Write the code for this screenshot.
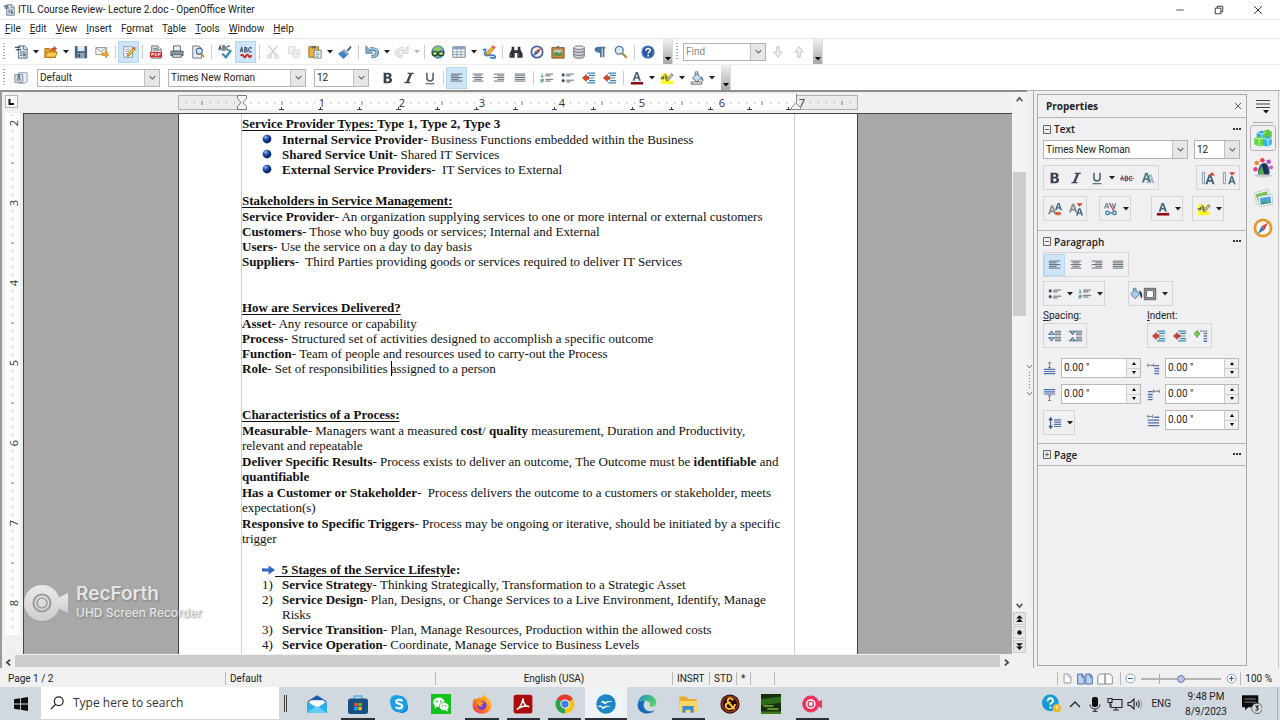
<!DOCTYPE html>
<html lang="en">
    <head>
        <meta charset="UTF-8" />
        <meta name="viewport" content="width=device-width, initial-scale=1.0" />
        <title>ITIL Course Review- Lecture 2.doc - OpenOffice Writer</title>
        <style>
            body {
                margin: 0;
                height: 100vh;
                overflow: hidden;
                font: 10px/14px Roboto, 'Open Sans', sans-serif;
                color: #222;
                background: #fff;
            }
        </style>
    </head>
    <body>
        <writer-app></writer-app>

        <template id="writer-app">
            <style>
                :host {
                    display: flex;
                    flex-direction: column;
                    height: 100%;
                }
                .work {
                    flex: 1;
                    min-height: 0;
                    display: flex;
                    background: #f0eff1;
                }
                .doc {
                    flex: 1;
                    min-width: 0;
                    display: flex;
                    flex-direction: column;
                    border-top: 2px solid #8e8e8e;
                    border-left: 2px solid #9a9a9a;
                    box-sizing: border-box;
                }
                .row {
                    flex: 1;
                    min-height: 0;
                    display: flex;
                }
                .pane {
                    flex: 1;
                    min-width: 0;
                    display: flex;
                    flex-direction: column;
                }
                .sheet {
                    flex: 1;
                    min-height: 0;
                    display: flex;
                }
                .canvas {
                    flex: 1;
                    display: flex;
                    justify-content: center;
                    overflow: hidden;
                    background: #a9a8a9;
                    border-top: 1px solid #444;
                    border-left: 1px solid #444;
                    box-sizing: border-box;
                }
            </style>
            <title-bar>ITIL Course Review- Lecture 2.doc - OpenOffice Writer</title-bar>
            <menu-bar></menu-bar>
            <standard-bar></standard-bar>
            <format-bar></format-bar>
            <div class="work">
                <div class="doc">
                    <div class="row">
                        <div class="pane">
                            <h-ruler></h-ruler>
                            <div class="sheet">
                                <v-ruler></v-ruler>
                                <div class="canvas"><doc-page></doc-page></div>
                            </div>
                        </div>
                        <v-scroll></v-scroll>
                    </div>
                    <h-scroll></h-scroll>
                </div>
                <side-bar></side-bar>
            </div>
            <status-bar></status-bar>
            <task-bar></task-bar>
            <rec-mark></rec-mark>
        </template>

        <template id="title-bar">
            <style>
                :host {
                    display: flex;
                    align-items: center;
                    height: 19px;
                    padding: 0 3px;
                    border-bottom: 1px solid #e4e4e4;
                }
                oo-icon {
                    --size: 12px;
                    margin-right: 3px;
                }
                span {
                    flex: 1;
                }
                button {
                    width: 39px;
                    height: 19px;
                    padding: 0;
                    border: 0;
                    background: none;
                }
                button oo-icon {
                    --size: 10px;
                    margin: 0;
                }
            </style>
            <oo-icon name="new"></oo-icon>
            <span><slot></slot></span>
            <button aria-label="Minimize"><oo-icon name="min"></oo-icon></button>
            <button aria-label="Restore"><oo-icon name="restore"></oo-icon></button>
            <button aria-label="Close"><oo-icon name="close"></oo-icon></button>
        </template>

        <template id="menu-bar">
            <style>
                :host {
                    display: block;
                    border-bottom: 1px solid #e4e4e4;
                }
                nav {
                    display: flex;
                    gap: 9px;
                    height: 18px;
                    padding-left: 5px;
                    align-items: center;
                }
                a {
                    color: #222;
                    text-decoration: none;
                }
                u {
                    text-underline-offset: 1px;
                }
            </style>
            <nav>
                <a href="#"><u>F</u>ile</a>
                <a href="#"><u>E</u>dit</a>
                <a href="#"><u>V</u>iew</a>
                <a href="#"><u>I</u>nsert</a>
                <a href="#">F<u>o</u>rmat</a>
                <a href="#">T<u>a</u>ble</a>
                <a href="#"><u>T</u>ools</a>
                <a href="#"><u>W</u>indow</a>
                <a href="#"><u>H</u>elp</a>
            </nav>
        </template>

        <template id="standard-bar">
            <style>
                :host {
                    display: flex;
                    align-items: center;
                    height: 25px;
                }
                tool-more {
                    margin-left: 5px;
                }
                combo-box {
                    width: 83px;
                    margin-right: 1px;
                    color: #8a8a8a;
                }
                .end {
                    margin-left: 4px;
                }
            </style>
            <tool-grip></tool-grip>
            <tool-button icon="new" label="New" drop></tool-button>
            <tool-button icon="open" label="Open" drop></tool-button>
            <tool-button icon="save" label="Save"></tool-button>
            <tool-button icon="mail" label="E-mail"></tool-button>
            <tool-sep></tool-sep>
            <tool-button icon="edit" label="Edit File" active></tool-button>
            <tool-sep></tool-sep>
            <tool-button icon="pdf" label="Export as PDF"></tool-button>
            <tool-button icon="print" label="Print"></tool-button>
            <tool-button icon="preview" label="Page Preview"></tool-button>
            <tool-sep></tool-sep>
            <tool-button icon="spell" label="Spelling"></tool-button>
            <tool-button icon="autospell" label="AutoSpellcheck" active></tool-button>
            <tool-sep></tool-sep>
            <tool-button icon="cut" label="Cut"></tool-button>
            <tool-button icon="copy" label="Copy"></tool-button>
            <tool-button icon="paste" label="Paste" drop></tool-button>
            <tool-button icon="brush" label="Format Paintbrush"></tool-button>
            <tool-sep></tool-sep>
            <tool-button icon="undo" label="Undo" drop></tool-button>
            <tool-button icon="redo" label="Redo" drop dim></tool-button>
            <tool-sep></tool-sep>
            <tool-button icon="link" label="Hyperlink"></tool-button>
            <tool-button icon="table" label="Table" drop></tool-button>
            <tool-button icon="draw" label="Show Draw Functions"></tool-button>
            <tool-sep></tool-sep>
            <tool-button icon="find" label="Find and Replace"></tool-button>
            <tool-button icon="compass" label="Navigator"></tool-button>
            <tool-button icon="gallery" label="Gallery"></tool-button>
            <tool-button icon="db" label="Data Sources"></tool-button>
            <tool-button icon="pilcrow" label="Nonprinting Characters"></tool-button>
            <tool-button icon="zoom" label="Zoom"></tool-button>
            <tool-sep></tool-sep>
            <tool-button icon="help" label="Help"></tool-button>
            <tool-more></tool-more>
            <tool-grip></tool-grip>
            <combo-box label="Find" text="Find" editable></combo-box>
            <tool-button icon="down" label="Find Next"></tool-button>
            <tool-button icon="up" label="Find Previous"></tool-button>
            <tool-more class="end"></tool-more>
        </template>

        <template id="format-bar">
            <style>
                :host {
                    display: flex;
                    align-items: center;
                    height: 26px;
                    border-top: 1px solid #ececec;
                    box-sizing: border-box;
                }
                combo-box {
                    width: 138px;
                    margin-right: 8px;
                }
                .style {
                    width: 123px;
                    margin-left: 6px;
                    margin-right: 8px;
                }
                .size {
                    width: 55px;
                }
                tool-more {
                    margin-left: 5px;
                }
            </style>
            <tool-grip></tool-grip>
            <tool-button icon="styles" label="Styles and Formatting"></tool-button>
            <combo-box class="style" label="Apply Style" text="Default"></combo-box>
            <combo-box label="Font Name" text="Times New Roman"></combo-box>
            <combo-box class="size" label="Font Size" text="12"></combo-box>
            <tool-button icon="bold" label="Bold"></tool-button>
            <tool-button icon="italic" label="Italic"></tool-button>
            <tool-button icon="underline" label="Underline"></tool-button>
            <tool-sep></tool-sep>
            <tool-button icon="left" label="Align Left" active></tool-button>
            <tool-button icon="center" label="Centered"></tool-button>
            <tool-button icon="right" label="Align Right"></tool-button>
            <tool-button icon="justify" label="Justified"></tool-button>
            <tool-sep></tool-sep>
            <tool-button icon="numbers" label="Numbering On/Off"></tool-button>
            <tool-button icon="bullets" label="Bullets On/Off"></tool-button>
            <tool-button icon="outdent" label="Decrease Indent"></tool-button>
            <tool-button icon="outdent" label="Increase Indent"></tool-button>
            <tool-sep></tool-sep>
            <tool-button icon="color" label="Font Color" drop></tool-button>
            <tool-button icon="highlight" label="Highlighting" drop></tool-button>
            <tool-button icon="fill" label="Background Color" drop></tool-button>
            <tool-more></tool-more>
        </template>

        <template id="doc-page">
            <style>
                :host {
                    display: block;
                    flex: none;
                    width: 680px;
                    box-sizing: border-box;
                    padding: 0 62px;
                    background: #fff;
                    border: solid #444;
                    border-width: 0 1px;
                    font: 13px/15px 'Liberation Serif', serif;
                    color: #111;
                }
                .body {
                    height: 100%;
                    padding-top: 2px;
                    box-sizing: border-box;
                    border: solid #d0d0d0;
                    border-width: 0 1px;
                    white-space: nowrap;
                }
                section {
                    margin-bottom: 31px;
                }
                section.near {
                    margin-bottom: 16px;
                }
                section.long p + p {
                    margin-top: 1px;
                }
                h2,
                p,
                ul,
                ol {
                    margin: 0;
                    padding: 0;
                    font-size: 13px;
                }
                h2 {
                    line-height: 16px;
                }
                u {
                    text-underline-offset: 2px;
                }
                li {
                    display: flex;
                    white-space: pre;
                }
                li > :first-child {
                    width: 20px;
                    padding-left: 20px;
                    flex: none;
                }
                li.stage > :first-child {
                    width: 13px;
                }
                oo-icon {
                    --size: 10px;
                    padding-top: 2px;
                    height: 10px;
                    display: block;
                }
                .arrow {
                    --size: 13px;
                    padding-top: 1px;
                }
                i {
                    display: inline-block;
                    width: 1px;
                    height: 15px;
                    margin-right: -1px;
                    vertical-align: top;
                    background: #000;
                }
            </style>
            <div class="body">
                <section class="near">
                    <h2><u>Service Provider Types: </u>Type 1, Type 2, Type 3</h2>
                    <ul>
                        <li><oo-icon name="ball"></oo-icon><span><b>Internal Service Provider</b>- Business Functions embedded within the Business</span></li>
                        <li><oo-icon name="ball"></oo-icon><span><b>Shared Service Unit</b>- Shared IT Services</span></li>
                        <li><oo-icon name="ball"></oo-icon><span><b>External Service Providers</b>-  IT Services to External</span></li>
                    </ul>
                </section>
                <section>
                    <h2><u>Stakeholders in Service Management:</u></h2>
                    <p><b>Service Provider</b>- An organization supplying services to one or more internal or external customers</p>
                    <p><b>Customers</b>- Those who buy goods or services; Internal and External</p>
                    <p><b>Users</b>- Use the service on a day to day basis</p>
                    <p><b>Suppliers</b>-&nbsp; Third Parties providing goods or services required to deliver IT Services</p>
                </section>
                <section>
                    <h2><u>How are Services Delivered?</u></h2>
                    <p><b>Asset</b>- Any resource or capability</p>
                    <p><b>Process</b>- Structured set of activities designed to accomplish a specific outcome</p>
                    <p><b>Function</b>- Team of people and resources used to carry-out the Process</p>
                    <p><b>Role</b>- Set of responsibilities <i></i>assigned to a person</p>
                </section>
                <section class="near long">
                    <h2><u>Characteristics of a Process:</u></h2>
                    <p><b>Measurable</b>- Managers want a measured <b>cost</b>/ <b>quality</b> measurement, Duration and Productivity,<br />relevant and repeatable</p>
                    <p><b>Deliver Specific Results</b>- Process exists to deliver an outcome, The Outcome must be <b>identifiable</b> and<br /><b>quantifiable</b></p>
                    <p><b>Has a Customer or Stakeholder</b>-&nbsp; Process delivers the outcome to a customers or stakeholder, meets<br />expectation(s)</p>
                    <p><b>Responsive to Specific Triggers</b>- Process may be ongoing or iterative, should be initiated by a specific<br />trigger</p>
                </section>
                <ol>
                    <li class="stage"><oo-icon class="arrow" name="arrow"></oo-icon><b><u>  5 Stages of the Service Lifestyl</u>e:</b></li>
                    <li><span>1)</span><span><b>Service Strategy</b>- Thinking Strategically, Transformation to a Strategic Asset</span></li>
                    <li><span>2)</span><span><b>Service Design</b>- Plan, Designs, or Change Services to a Live Environment, Identify, Manage<br />Risks</span></li>
                    <li><span>3)</span><span><b>Service Transition</b>- Plan, Manage Resources, Production within the allowed costs</span></li>
                    <li><span>4)</span><span><b>Service Operation</b>- Coordinate, Manage Service to Business Levels</span></li>
                </ol>
            </div>
        </template>

        <template id="v-scroll">
            <style>
                :host {
                    display: flex;
                    flex-direction: column;
                    width: 15px;
                    background: #f4f3f4;
                }
                button {
                    display: grid;
                    place-items: center;
                    height: 14px;
                    margin: 0 1px;
                    padding: 0;
                    border: 0;
                    background: none;
                }
                .box {
                    height: 13px;
                    margin-bottom: 1px;
                    background: #e6e6e6;
                    border: 1px solid #c8c8c8;
                }
                oo-icon {
                    --size: 9px;
                }
                .track {
                    flex: 1;
                    padding: 66px 1px 0;
                }
                .thumb {
                    height: 144px;
                    background: #cdcccd;
                }
            </style>
            <button aria-label="Scroll up"><oo-icon name="chevup"></oo-icon></button>
            <div class="track"><div class="thumb"></div></div>
            <button aria-label="Scroll down"><oo-icon name="chevdown"></oo-icon></button>
            <button class="box" aria-label="Previous page"><oo-icon name="pageup"></oo-icon></button>
            <button class="box" aria-label="Navigation"><oo-icon name="dot"></oo-icon></button>
            <button class="box" aria-label="Next page"><oo-icon name="pagedown"></oo-icon></button>
        </template>

        <template id="h-scroll">
            <style>
                :host {
                    display: flex;
                    height: 14px;
                    padding-right: 14px;
                    background: #f0f0f0;
                }
                button {
                    width: 13px;
                    padding: 0;
                    border: 0;
                    background: none;
                }
                oo-icon {
                    --size: 9px;
                }
                .thumb {
                    flex: 1;
                    margin: 1px 0;
                    background: #cdcccd;
                }
            </style>
            <button aria-label="Scroll left"><oo-icon name="chevleft"></oo-icon></button>
            <div class="thumb"></div>
            <button aria-label="Scroll right"><oo-icon name="chevright"></oo-icon></button>
        </template>

        <template id="side-bar">
            <style>
                :host {
                    display: flex;
                    border-top: 1px solid #b0b0b0;
                    box-sizing: border-box;
                }
                .split {
                    width: 6px;
                    display: grid;
                    align-items: center;
                    border-right: 1px solid #a8a8a8;
                }
                .panel {
                    width: 208px;
                    margin: 3px 0 2px 3px;
                    border: 1px solid #aaa;
                }
                header {
                    display: flex;
                    align-items: center;
                    justify-content: space-between;
                    height: 22px;
                    padding: 0 4px 0 8px;
                    border-bottom: 1px solid #b4b4b4;
                }
                h2 {
                    margin: 0;
                    font: 700 10px/14px 'Open Sans', sans-serif;
                }
                header button,
                .tabs button {
                    border: 0;
                    padding: 0;
                    background: none;
                    display: grid;
                    place-items: center;
                }
                header oo-icon {
                    --size: 8px;
                }
                .body {
                    display: grid;
                    gap: 6px;
                    padding: 0 6px 9px 5px;
                }
                .body.para {
                    gap: 4px;
                    padding-bottom: 8px;
                }
                .fonts {
                    display: grid;
                    grid-template-columns: 1fr 46px;
                    gap: 6px;
                }
                combo-box {
                    height: 19px;
                }
                .line {
                    display: grid;
                    grid-template-columns: 1fr auto;
                    justify-items: start;
                }
                .four {
                    grid-template-columns: 56px 52px 41px auto;
                }
                .fill {
                    grid-template-columns: 85px auto;
                }
                .two {
                    display: grid;
                    grid-template-columns: 104px 1fr;
                    justify-items: start;
                    row-gap: 1px;
                    line-height: 12px;
                }
                .fields {
                    display: grid;
                    grid-template-columns: 98px 92px;
                    gap: 6px;
                    padding-top: 6px;
                }
                .tabs {
                    width: 30px;
                    display: flex;
                    flex-direction: column;
                    align-items: center;
                    gap: 4px;
                    padding-top: 6px;
                    padding-left: 1px;
                    border-right: 1px solid #c4c4c4;
                    margin-right: 1px;
                }
                .tabs button {
                    width: 26px;
                    height: 26px;
                    box-sizing: border-box;
                    border-radius: 3px;
                }
                .tabs .menu {
                    height: 18px;
                }
                .tabs hr {
                    width: 20px;
                    margin: 3px 0 0;
                    border: 0;
                    border-top: 1px solid #aaa;
                }
                .tabs .on {
                    border: 1px solid #b4b4b4;
                    margin-top: -2px;
                }
                .tabs oo-icon {
                    --size: 20px;
                }
                .tabs .menu oo-icon {
                    --size: 16px;
                }
            </style>
            <div class="split">
                <svg width="5" height="32" fill="none" stroke="#777">
                    <path d="M0 1l2.500 3L5 1M0 28l2.500 3 2.500-3" />
                    <path d="M2.500 8v18" stroke-dasharray="1 2" />
                </svg>
            </div>
            <div class="panel">
                <header>
                    <h2>Properties</h2>
                    <button aria-label="Close Sidebar"><oo-icon name="close"></oo-icon></button>
                </header>
                <panel-head open>Text</panel-head>
                <div class="body">
                    <div class="fonts">
                        <combo-box label="Font Name" text="Times New Roman"></combo-box>
                        <combo-box label="Font Size" text="12"></combo-box>
                    </div>
                    <div class="line">
                        <tool-group>
                            <tool-button icon="bold" label="Bold"></tool-button>
                            <tool-button icon="italic" label="Italic"></tool-button>
                            <tool-button icon="underline" label="Underline" drop></tool-button>
                            <tool-button icon="strike" label="Strikethrough"></tool-button>
                            <tool-button icon="shadow" label="Shadow"></tool-button>
                        </tool-group>
                        <tool-group>
                            <tool-button icon="grow" label="Increase Font Size"></tool-button>
                            <tool-button icon="shrink" label="Decrease Font Size"></tool-button>
                        </tool-group>
                    </div>
                    <div class="line four">
                        <tool-group>
                            <tool-button icon="super" label="Superscript"></tool-button>
                            <tool-button icon="sub" label="Subscript"></tool-button>
                        </tool-group>
                        <tool-group><tool-button icon="spacing" label="Character Spacing" drop></tool-button></tool-group>
                        <tool-group><tool-button icon="color" label="Font Color" drop></tool-button></tool-group>
                        <tool-group><tool-button icon="highlight" label="Highlighting" drop></tool-button></tool-group>
                    </div>
                </div>
                <panel-head open>Paragraph</panel-head>
                <div class="body para">
                    <tool-group>
                        <tool-button icon="left" label="Align Left" active></tool-button>
                        <tool-button icon="center" label="Centered"></tool-button>
                        <tool-button icon="right" label="Align Right"></tool-button>
                        <tool-button icon="justify" label="Justified"></tool-button>
                    </tool-group>
                    <div class="line fill">
                        <tool-group>
                            <tool-button icon="bullets" label="Bullets" drop></tool-button>
                            <tool-button icon="numbers" label="Numbering" drop></tool-button>
                        </tool-group>
                        <tool-group>
                            <tool-button class="tight" icon="bucket" label="Background"></tool-button>
                            <tool-button class="tight" icon="square" label="Paragraph Color" drop></tool-button>
                        </tool-group>
                    </div>
                    <div class="two">
                        <span><u>S</u>pacing:</span>
                        <span><u>I</u>ndent:</span>
                        <tool-group>
                            <tool-button icon="morespace" label="Increase Spacing"></tool-button>
                            <tool-button icon="lessspace" label="Decrease Spacing"></tool-button>
                        </tool-group>
                        <tool-group>
                            <tool-button icon="outdent" label="Increase Indent"></tool-button>
                            <tool-button icon="outdent" label="Decrease Indent"></tool-button>
                            <tool-button icon="hanging" label="Hanging Indent"></tool-button>
                        </tool-group>
                    </div>
                    <div class="fields">
                        <spin-field icon="above" label="Above Paragraph"></spin-field>
                        <spin-field icon="before" label="Before Text"></spin-field>
                        <spin-field icon="below" label="Below Paragraph"></spin-field>
                        <spin-field icon="after" label="After Text"></spin-field>
                        <tool-group><tool-button icon="linespace" label="Line Spacing" drop></tool-button></tool-group>
                        <spin-field icon="firstline" label="First Line"></spin-field>
                    </div>
                </div>
                <panel-head last>Page</panel-head>
            </div>
            <div class="tabs">
                <button class="menu" aria-label="Sidebar Settings"><oo-icon name="menu"></oo-icon></button>
                <hr />
                <button class="on" aria-label="Properties"><oo-icon name="cubes"></oo-icon></button>
                <button aria-label="Styles"><oo-icon name="people"></oo-icon></button>
                <button aria-label="Gallery"><oo-icon name="photos"></oo-icon></button>
                <button aria-label="Navigator"><oo-icon name="navring"></oo-icon></button>
            </div>
        </template>

        <template id="status-bar">
            <style>
                :host {
                    display: flex;
                    height: 19px;
                    align-items: center;
                    padding: 2px 8px 0 8px;
                    box-sizing: border-box;
                    background: #f0f0f1;
                }
                span {
                    height: 13px;
                    line-height: 13px;
                    box-sizing: border-box;
                    padding-left: 4px;
                    border-left: 1px solid #b8b8b8;
                }
                .page {
                    width: 217px;
                    padding: 0;
                    border: 0;
                }
                .style {
                    width: 210px;
                }
                .lang {
                    width: 237px;
                    padding: 0;
                    text-align: center;
                }
                .ins {
                    width: 37px;
                }
                .std {
                    width: 27px;
                }
                .mod {
                    width: 14px;
                }
                .sig {
                    width: 24px;
                }
                .rest {
                    flex: 1;
                }
                .views,
                .zoom {
                    display: flex;
                    align-items: center;
                }
                .views {
                    width: 63px;
                    gap: 4px;
                }
                .zoom {
                    width: 120px;
                    gap: 2px;
                }
                .views oo-icon.wide {
                    --size: 16px;
                }
                oo-icon {
                    --size: 11px;
                }
                button {
                    display: flex;
                    padding: 0;
                    border: 0;
                    background: none;
                }
                input {
                    appearance: none;
                    width: 80px;
                    height: 13px;
                    margin: 0 3px;
                    background: linear-gradient(#aaa, #aaa) 18px 2px / 1px 10px no-repeat,
                        linear-gradient(#b4b4b4, #b4b4b4) 0 6px / 80px 2px no-repeat;
                }
                input::-webkit-slider-thumb {
                    appearance: none;
                    width: 8px;
                    height: 8px;
                    border: 1px solid #6f7cb0;
                    border-radius: 50%;
                    background: #b9c3ee;
                }
            </style>
            <span class="page">Page 1 / 2</span>
            <span class="style">Default</span>
            <span class="lang">English (USA)</span>
            <span class="ins">INSRT</span>
            <span class="std">STD</span>
            <span class="mod">*</span>
            <span class="sig"></span>
            <span class="rest"></span>
            <span class="views">
                <button aria-label="Single page"><oo-icon name="page1"></oo-icon></button>
                <button aria-label="Multiple pages"><oo-icon class="wide" name="page2"></oo-icon></button>
                <button aria-label="Book view"><oo-icon class="wide" name="book"></oo-icon></button>
            </span>
            <span class="zoom">
                <button aria-label="Zoom out"><oo-icon name="minus"></oo-icon></button>
                <input type="range" aria-label="Zoom" min="0" max="100" value="49" />
                <button aria-label="Zoom in"><oo-icon name="plus"></oo-icon></button>
            </span>
            <span>100 %</span>
        </template>

        <template id="task-bar">
            <style>
                :host {
                    display: flex;
                    align-items: stretch;
                    height: 33px;
                    background: #d2d8e0;
                }
                button {
                    display: grid;
                    place-items: center;
                    padding: 0;
                    border: 0;
                    background: none;
                }
                .start {
                    width: 41px;
                }
                .start oo-icon {
                    --size: 14px;
                }
                .search {
                    width: 238px;
                    display: flex;
                    align-items: center;
                    margin-bottom: 1px;
                    background: #fff;
                }
                .search oo-icon {
                    --size: 14px;
                    margin: 0 9px;
                }
                input {
                    flex: 1;
                    min-width: 0;
                    border: 0;
                    padding: 0;
                    outline: 0;
                    font: 12px/16px 'Open Sans', sans-serif;
                }
                input::placeholder {
                    color: #333;
                }
                .bars {
                    width: 1px;
                    margin: 8px 9px 8px 5px;
                    border: solid #444;
                    border-width: 0 1px;
                }
                .apps {
                    flex: 0 0 537px;
                    display: flex;
                }
                .apps button {
                    flex: 1;
                    box-sizing: border-box;
                    border: solid transparent;
                    border-width: 2px 0;
                }
                .apps .run {
                    border-image: linear-gradient(90deg, transparent 4px, #2b3036 4px, #2b3036 37px, transparent 37px) 0 0 2 0 / 0 0 2px 0;
                }
                .apps .on {
                    background: #eff3f7;
                    border-image: linear-gradient(#2b3036, #2b3036) 0 0 2 0 / 0 0 2px 0;
                }
                .apps oo-icon {
                    --size: 20px;
                }
                .tray {
                    margin-left: auto;
                    display: flex;
                    align-items: center;
                    gap: 4px;
                    padding-right: 15px;
                    border-right: 1px solid #aab;
                    margin-right: 2px;
                }
                .tray oo-icon {
                    --size: 16px;
                }
                .tray .ask {
                    --size: 19px;
                    margin-right: 2px;
                }
                .tray .note {
                    --size: 20px;
                }
                .lang {
                    font-size: 10px;
                    padding: 0 10px 0 4px;
                }
                time {
                    text-align: center;
                    line-height: 15px;
                    padding-right: 11px;
                }
            </style>
            <button class="start" aria-label="Start"><oo-icon name="windows"></oo-icon></button>
            <div class="search">
                <oo-icon name="lens"></oo-icon>
                <input type="text" aria-label="Search" placeholder="Type here to search" />
            </div>
            <div class="bars"></div>
            <div class="apps">
                <button aria-label="Mail"><oo-icon name="appmail"></oo-icon></button>
                <button class="run" aria-label="Microsoft Store"><oo-icon name="store"></oo-icon></button>
                <button aria-label="Skype"><oo-icon name="skype"></oo-icon></button>
                <button aria-label="WeChat"><oo-icon name="wechat"></oo-icon></button>
                <button class="run" aria-label="Firefox"><oo-icon name="firefox"></oo-icon></button>
                <button class="run" aria-label="Acrobat"><oo-icon name="acrobat"></oo-icon></button>
                <button class="run" aria-label="Chrome"><oo-icon name="chrome"></oo-icon></button>
                <button class="on" aria-label="OpenOffice"><oo-icon name="office"></oo-icon></button>
                <button aria-label="Edge"><oo-icon name="edge"></oo-icon></button>
                <button class="run" aria-label="File Explorer"><oo-icon name="explorer"></oo-icon></button>
                <button aria-label="Game"><oo-icon name="ring"></oo-icon></button>
                <button aria-label="Webcam"><oo-icon name="green"></oo-icon></button>
                <button class="run" aria-label="RecForth"><oo-icon name="camera"></oo-icon></button>
            </div>
            <div class="tray">
                <oo-icon class="ask" name="ask"></oo-icon>
                <oo-icon name="trayup"></oo-icon>
                <oo-icon name="mic"></oo-icon>
                <oo-icon name="monitor"></oo-icon>
                <oo-icon name="volume"></oo-icon>
                <span class="lang">ENG</span>
                <time datetime="2023-08-09T21:48">9:48 PM<br />8/9/2023</time>
                <oo-icon class="note" name="note"></oo-icon>
            </div>
        </template>

        <template id="rec-mark">
            <style>
                /* floats over the document, so it stays out of the flow */
                :host {
                    position: absolute;
                    left: 24px;
                    bottom: 98px;
                    display: flex;
                    align-items: center;
                    gap: 8px;
                    color: #ececec;
                    opacity: 0.9;
                    pointer-events: none;
                    font-family: Inter, sans-serif;
                    text-shadow: 1px 1px 2px #777;
                }
                b {
                    display: block;
                    font-size: 19px;
                    line-height: 20px;
                    font-weight: 600;
                }
                span {
                    font-size: 12px;
                    line-height: 18px;
                    font-weight: 500;
                }
            </style>
            <svg width="44" height="38" viewBox="0 0 44 38">
                <defs>
                    <linearGradient id="g" x2="0" y2="1">
                        <stop stop-color="#f2f2f2" />
                        <stop offset="1" stop-color="#d2d2d2" />
                    </linearGradient>
                </defs>
                <circle cx="18" cy="20" r="18" fill="#8e8e8e" opacity=".4" />
                <path d="M32 15l12-6v20l-12-6z" fill="url(#g)" />
                <circle cx="18" cy="19" r="18" fill="url(#g)" />
                <circle cx="18" cy="19" r="8.500" fill="none" stroke="#9a9a9a" stroke-width="2" />
                <circle cx="18" cy="19" r="5" fill="none" stroke="#9a9a9a" stroke-width="1.500" />
            </svg>
            <div><b>RecForth</b><span>UHD Screen Recorder</span></div>
        </template>

        <script>
            const lines = (rows) =>
                rows.map(([x, y, w]) => `<path d="M${x} ${y}h${w}" stroke="#505a62"/>`).join('')
            const letterA = (x, y, k, c) =>
                `<path transform="translate(${x} ${y}) scale(${k})" d="M0 10L3.500 0h2.500L9.500 10H7.300L6.500 7.600H3L2.200 10zM3.600 5.800h2.300L4.700 2z" fill="${c}"/>`

            // every drawing uses a 16 x 16 box
            const icons = {
                new: '<path d="M5 1h7l3 3v11H5z" fill="#dfe7ee" stroke="#4d6070"/><path d="M11 1v4h4" fill="#fff" stroke="#4d6070"/><path d="M1 2h6v1.500H1zM2 4.500h6V6H2z" fill="#40566a"/><path d="M7 8h6M7 10h2M7 12h2" stroke="#456"/><path d="M10 9.500h3.500v3.500H10z" fill="#5b7d96"/>',
                open: '<path d="M1 14V4h5l1 2h6v8z" fill="#e9a52a" stroke="#a76a10"/><path d="M1 14l3-6h11l-2 6z" fill="#fcca4e" stroke="#a76a10"/><path d="M7 7c0-3 2-4 4-4V1l4 3-4 3V5C9 5 8 6 7 7z" fill="#d6441c"/>',
                save: '<rect x="1" y="1" width="14" height="14" rx="1" fill="#4a6580"/><path d="M4 1h8v6H4z" fill="#e5edf4"/><path d="M4 9h8v6H4z" fill="#91a6b8"/><path d="M5 10h2v4H5z" fill="#344b60"/>',
                mail: '<path d="M1 3h12v8H1z" fill="#f4f4f4" stroke="#888"/><path d="M1 3l6 5 6-5" fill="none" stroke="#888"/><path d="M8 9h4V6l4 5-4 4v-3H8z" fill="#efa634" stroke="#b67414" stroke-width=".6"/>',
                edit: '<path d="M2 2h10v12H2z" fill="#fff" stroke="#7a8a98"/><path d="M4 5h5M4 7.500h4M4 10h3" stroke="#789"/><path d="M7 10l6-7 2 2-6 7-3 1z" fill="#f4c83c" stroke="#755b1a" stroke-width=".8"/><path d="M12.500 3.500l1.500-1.500 1.500 1.500L14 5z" fill="#d44"/>',
                pdf: '<path d="M3 1h7l4 4v10H3z" fill="#d3dae0" stroke="#66737e"/><path d="M5 4h4M5 6h6" stroke="#66737e"/><path d="M10 1v4h4" fill="#fff" stroke="#66737e"/><rect x="1" y="8" width="14" height="6" fill="#d6282b"/><path d="M3 12.500v-3h2v1.500H3M7 9.500v3c3 0 3-3 0-3M11 12.500v-3h2.500M11 11h2" fill="none" stroke="#fff" stroke-width=".9"/>',
                print: '<path d="M4 1h8v6H4z" fill="#e9eff4" stroke="#56636e"/><path d="M1 7h14v5H1z" fill="#8b98a2" stroke="#4e5962"/><path d="M3 11h10v3H3z" fill="#dfe5e9" stroke="#4e5962"/>',
                preview: '<path d="M2 1h7l3 3v11H2z" fill="#e4ebf1" stroke="#5d6f7e"/><circle cx="9.500" cy="7" r="3.500" fill="#cfe6f7" stroke="#4d6a83" stroke-width="1.300"/><path d="M12 10l3 4" stroke="#d5982e" stroke-width="2"/>',
                spell: '<path d="M.8 6L2.300 1l1.500 5M1.300 4.300h2M5.500 1v5h1.500c2 0 2-2.500 0-2.500H5.500 7C8.500 3.500 8.500 1 7 1zM13.500 1.800C11.500 0 10 1.500 10 3.500s1.500 3.500 3.500 1.700" fill="none" stroke="#3e4f5e" stroke-width="1.200"/><path d="M5 10l4 4 6-8" fill="none" stroke="#3987be" stroke-width="2.500"/>',
                autospell: '<path d="M1.500 8L3 3l1.500 5M2 6.500h2M6.500 3v5H8c2 0 2-2.500 0-2.500H6.500 8C9.500 5.500 9.500 3 8 3zM14.500 3.800C12.500 2 11 3.500 11 5.500s1.500 3.500 3.500 1.700" fill="none" stroke="#3e4f5e" stroke-width="1.200"/><path d="M2 12.500q1.500-3 3 0t3 0 3 0 3-1" fill="none" stroke="#d5201e" stroke-width="2.200"/>',
                cut: '<path d="M3 1l8 10M13 1L5 11" stroke="#cfcfcf" stroke-width="1.800"/><circle cx="4" cy="13" r="2" fill="none" stroke="#d2d2d2" stroke-width="1.500"/><circle cx="12" cy="13" r="2" fill="none" stroke="#d2d2d2" stroke-width="1.500"/>',
                copy: '<path d="M2 2h7v8H2z" fill="#f4f4f4" stroke="#d0d0d0"/><path d="M7 6h7v8H7z" fill="#f4f4f4" stroke="#d0d0d0"/><path d="M9 9h3M9 11h3" stroke="#d6d6d6"/>',
                paste: '<path d="M1 2h11v12H1z" fill="#e9b33d" stroke="#8d651a"/><path d="M4 1h5v3H4z" fill="#5e6d7a"/><path d="M7 6h8v9H7z" fill="#eaf0f5" stroke="#67798a"/><path d="M9 9h4M9 11h4M9 13h3" stroke="#89a"/>',
                brush: '<path d="M10 6l4-5 1.500 1.500-4 5z" fill="#3a567c"/><path d="M7 5l5 5-2 2-5-5z" fill="#9fb5cc" stroke="#3d6394" stroke-width=".7"/><path d="M5 7l5 5-4 3.500L.5 10z" fill="#3b86d3" stroke="#245a9b" stroke-width=".7"/>',
                undo: '<path d="M7.500 13.500c9-1 8-9 1-9H6" fill="none" stroke="#436f90" stroke-width="4"/><path d="M7.500 13.500c9-1 8-9 1-9H6" fill="none" stroke="#9cc8e4" stroke-width="2"/><path d="M1 1v8.500h8z" fill="#7db2d4" stroke="#436f90" stroke-width=".8"/>',
                redo: '<path d="M8.500 13.500c-9-1-8-9-1-9H10" fill="none" stroke="#cbcbcb" stroke-width="4"/><path d="M8.500 13.500c-9-1-8-9-1-9H10" fill="none" stroke="#eee" stroke-width="2"/><path d="M15 1v8.500H7z" fill="#e6e6e6" stroke="#cbcbcb" stroke-width=".8"/>',
                link: '<circle cx="8" cy="8" r="7" fill="#5fa4cf" stroke="#2e5878"/><path d="M3 4c3-3 8-3 9 0l-3 3-3-1-3 1zM2 10l3-1 3 4-2 1z" fill="#8fca5c"/><rect x="1.500" y="7.500" width="6" height="4.500" rx="2.200" fill="#b9dc8f" stroke="#244a22" stroke-width="1.500"/><rect x="8.500" y="7.500" width="6" height="4.500" rx="2.200" fill="#b9dc8f" stroke="#244a22" stroke-width="1.500"/>',
                table: '<path d="M1 2h14v12H1z" fill="#fff" stroke="#60798c"/><path d="M1 2h14v3H1z" fill="#86a8c4"/><path d="M1 8h14M1 11h14M5.700 2v12M10.300 2v12" stroke="#8098aa"/>',
                draw: '<path d="M1 6c2-2 4-1 3 1s-2 5 2 5 8-2 9 1-4 2-6 1" fill="none" stroke="#3a83c5" stroke-width="2"/><path d="M5 9l7-8 3 2-7 8-3 1z" fill="#f3b23c" stroke="#a06c18" stroke-width=".8"/><path d="M11 2l1.500-1.500 3 2L14.500 4z" fill="#d55"/>',
                find: '<path d="M3 2h3v4h4V2h3v3l2.500 5v4.500H9.500V9h-3v5.500H.5V10L3 5z" fill="#2e3236"/><path d="M2 10v3M11 10v3" stroke="#6f7880"/>',
                compass: '<circle cx="8" cy="8" r="6.500" fill="#f5f7fa" stroke="#46679b" stroke-width="2"/><path d="M13 3L9.500 9.500 6.500 6.500z" fill="#d5352c"/><path d="M3 13l3.500-6.500 3 3z" fill="#2c61ae"/>',
                gallery: '<path d="M6 3l2-2 2 2" fill="none" stroke="#555"/><path d="M1 3h14v12H1z" fill="#c48a3e" stroke="#755020"/><path d="M3.500 5.500h9v7h-9z" fill="#a5d4ee"/><path d="M3.500 12.500v-3l2.500-2 3 2 3.500-2v5z" fill="#5c9148"/><circle cx="6" cy="7" r="1" fill="#f4cc34"/>',
                db: '<path d="M2 3v10c0 3 12 3 12 0V3z" fill="#ccd0d3" stroke="#60676d"/><ellipse cx="8" cy="3" rx="6" ry="2" fill="#f0f1f2" stroke="#60676d"/><path d="M2 6.500c0 2.500 12 2.500 12 0M2 10c0 2.500 12 2.500 12 0" fill="none" stroke="#60676d"/>',
                pilcrow: '<path d="M6.500 2H14v2h-1v10h-2V4h-1v10H8V9C0 9 0 2 6.500 2z" fill="#467899"/>',
                zoom: '<circle cx="6" cy="6" r="4.500" fill="#d8ecfa" stroke="#557a9c" stroke-width="1.500"/><path d="M9.500 9.500l5 5" stroke="#b98334" stroke-width="2.500"/>',
                help: '<circle cx="8" cy="8" r="7.500" fill="#2a58a5"/><circle cx="8" cy="8" r="6.500" fill="none" stroke="#7ea2d9" stroke-width=".6"/><path d="M5.500 6.500C5.500 3 11 3.300 10.500 6.500 10.200 8 8.200 8 8.200 9.800M8.200 11v2" fill="none" stroke="#fff" stroke-width="1.800"/>',
                down: '<path d="M6.500 2h3v6H13l-5 6-5-6h3.500z" fill="#eee" stroke="#c4c4c4"/>',
                up: '<path d="M6.500 14h3V8H13L8 2 3 8h3.500z" fill="#eee" stroke="#c4c4c4"/>',
                styles: '<path d="M5 2h10v10l-3 2H5z" fill="#eef1f3" stroke="#8a969f"/><path d="M1 4h9v9H1z" fill="#dfe4e8" stroke="#75828c"/><path d="M3 11c0-4 2-5 3-5s2 3 2 5z" fill="#8497a5"/><circle cx="5.500" cy="6" r="1.500" fill="#5b7182"/>',
                bold: '<path d="M3 2h5c5 0 5 4.700 2.200 5.500C14 8.300 13.500 14 8.500 14H3zM6 4v2.700h1.500c2.200 0 2.200-2.700 0-2.700zM6 8.700V12h1.800c2.600 0 2.600-3.300 0-3.300z" fill="#36424c"/>',
                italic: '<path d="M6.500 2H13.500v1.300h-2L7.700 12.700h2V14h-7v-1.300h2L8.500 3.300h-2z" fill="#3d4a54"/>',
                underline: '<path d="M4.500 2v6c0 4.500 7 4.500 7 0V2" fill="none" stroke="#52606b" stroke-width="1.800"/><path d="M3 14.500h10" stroke="#52606b" stroke-width="1.300"/>',
                left: lines([[1, 3.500, 13], [1, 5.500, 9], [1, 7.500, 13], [1, 9.500, 9], [1, 11.500, 13]]),
                center: lines([[2, 3.500, 12], [4, 5.500, 8], [2, 7.500, 12], [4, 9.500, 8], [2, 11.500, 12]]),
                right: lines([[2, 3.500, 12], [6, 5.500, 8], [2, 7.500, 12], [6, 9.500, 8], [2, 11.500, 12]]),
                justify: lines([[2, 3.500, 12], [2, 5.500, 12], [2, 7.500, 12], [2, 9.500, 12], [2, 11.500, 12]]),
                numbers: '<path d="M1.500 3.500h1v3M1 6.500h3M1 9.500h3v1.500H1v1.500h3" fill="none" stroke="#43859c"/>' + lines([[6, 3.500, 9], [6, 5.500, 6], [6, 9.500, 9], [6, 11.500, 6]]),
                bullets: '<circle cx="2.500" cy="4.500" r="1.800" fill="#3d5363"/><circle cx="2.500" cy="11" r="1.800" fill="#3d5363"/>' + lines([[6, 3.500, 9], [6, 5.500, 5], [6, 10.500, 9], [6, 12.500, 5]]),
                outdent: '<path d="M.5 8L5 4v2.500h3v3H5V12z" fill="#d8432b" stroke="#8c2314" stroke-width=".6"/><path d="M6 2.500h9M8 5h7M9 8h5M8 11h7M6 13.500h9" stroke="#3f87ad" stroke-width="1.300"/>',
                color: letterA(3, 1, 1, '#41647e') + '<path d="M1 12.500h14v3H1z" fill="#8e0d16"/>',
                highlight: '<path d="M1 11h14v4H1z" fill="#ffff1c"/><path d="M1 3h8v8H1z" fill="#fff53a"/><path d="M1.500 9V7.500L4 7v2zM4 9V5.500M6 3v6h2V6H6" fill="none" stroke="#57613a" stroke-width="1.100"/><path d="M8 9l5-6 2 1.500-5 6-2.500 1z" fill="#d9c98a" stroke="#5e5a3d" stroke-width=".8"/>',
                fill: '<path d="M3 8l5-5 5 5-5 4.500z" fill="#c9dbe8" stroke="#4a6375"/><path d="M6 5V1h3v4" fill="none" stroke="#4a6375"/><path d="M13 6c2 2 2.500 4 2 6-2-1-2.500-3-2-6z" fill="#3a6d94"/><path d="M1.500 12.500h12v2.500h-12z" fill="#fff" stroke="#555"/>',
                bucket: '<path d="M2 8l5-5 5 5-5 5.500z" fill="#a9c9ee" stroke="#4473a9"/><path d="M5 5V1.500h3V5" fill="none" stroke="#4473a9"/><path d="M11 4c4 1 5 5 3.500 9C12.500 11 13 8 11 4z" fill="#27394c"/>',
                square: '<path d="M1.500 1.500h13v13h-13z" fill="#8f9194" stroke="#55585c"/><path d="M4 4h8v8H4z" fill="#fff" stroke="#666"/>',
                strike: '<path d="M1 11l1.500-5L4 11M6 6v5h1.500c2 0 2-2.500 0-2.500H6h1.500C9 8.500 9 6 7.500 6zM14 6.700C12 5 10.500 6.500 10.500 8.500S12 12 14 10.200" fill="none" stroke="#555" stroke-width="1.200"/><path d="M0 8.500h16" stroke="#954" stroke-width="1"/>',
                shadow: letterA(6, 4, 1, '#9db7bd') + letterA(1, 2, 1.100, '#4c7c92'),
                grow: '<path d="M1.500 1.500h2.500v13H1.500z" fill="#dfe8ef" stroke="#6b8293" stroke-width=".8"/>' + letterA(5, 4, 1.100, '#41647e') + '<path d="M9 5l3.500-4L16 5z" fill="#d9412c"/>',
                shrink: '<path d="M1.500 1.500h2.500v13H1.500z" fill="#dfe8ef" stroke="#6b8293" stroke-width=".8"/>' + letterA(7, 6, 0.900, '#41647e') + '<path d="M8 1.500l3.500 3.800L15 1.500z" fill="#d9412c"/>',
                super: letterA(0, 4, 1, '#888') + letterA(8, 1, 0.850, '#41647e') + '<ellipse cx="11.500" cy="13" rx="3.500" ry="2" fill="#d9603c"/>',
                sub: letterA(0, 2, 1, '#888') + letterA(8, 7, 0.850, '#41647e') + '<path d="M8.500 1.500l3.500 3.800 3.500-3.800z" fill="#d9412c"/>',
                spacing: letterA(0, 1, 0.650, '#70808c') + '<path d="M9.500 1.500l2 6 2-6" fill="none" stroke="#70808c" stroke-width="1.400"/><path d="M6 1l5 9" stroke="#d92c44" stroke-width="1.300"/><circle cx="4" cy="12.500" r="2" fill="none" stroke="#3778a8" stroke-width="1.500"/><circle cx="12" cy="12.500" r="2" fill="none" stroke="#3778a8" stroke-width="1.500"/><path d="M6 12.500h4" stroke="#3778a8" stroke-width="1.500"/>',
                morespace: '<path d="M1 6l3-3.500L7 6zM1 10l3 3.500L7 10z" fill="#d5e9f6" stroke="#2f7090" stroke-width="1.200"/>' + lines([[8, 2.500, 7], [8, 4.500, 7], [8, 6.500, 7], [8, 9.500, 7], [8, 11.500, 7], [8, 13.500, 7]]),
                lessspace: '<path d="M1 2.500l3 3.500 3-3.500zM1 13.500L4 10l3 3.500z" fill="#d5e9f6" stroke="#2f7090" stroke-width="1.200"/>' + lines([[8, 2.500, 7], [8, 4.500, 7], [8, 6.500, 7], [8, 9.500, 7], [8, 11.500, 7], [8, 13.500, 7]]),
                hanging: '<path d="M0 5.500l4-4v2.500h2v3H4V10z" fill="#7fd04a" stroke="#47882a" stroke-width=".7"/><path d="M7 2.500h8" stroke="#56749c" stroke-width="1.500" stroke-dasharray="2 1"/><path d="M11 5h4M11 8h4M11 11h4M11 14h4" stroke="#56749c" stroke-width="1.500"/>',
                above: '<path d="M6 1h4M8 1v6M6 7h4" stroke="#666" fill="none"/><path d="M1 9h14M1 11.700h14M1 14.400h14" stroke="#506fa8" stroke-width="1.500"/>',
                below: '<path d="M6 9.500h4M8 9.500v6M6 15.500h4" stroke="#666" fill="none"/><path d="M1 2h14M1 4.700h14M1 7.400h14" stroke="#506fa8" stroke-width="1.500"/>',
                before: '<path d="M1 2v4M1 4h7M8 2v4" stroke="#666" fill="none"/><path d="M9 4.500h6M9 8h6M9 11.200h6M9 14.400h6" stroke="#506fa8" stroke-width="1.600"/>',
                after: '<path d="M8 2v4M8 4h7M15 2v4" stroke="#666" fill="none"/><path d="M1 4.500h6M1 8h6M1 11.200h6M1 14.400h6" stroke="#506fa8" stroke-width="1.600"/>',
                firstline: '<path d="M1 1v4M1 3h6M7 1v4" stroke="#666" fill="none"/><path d="M9 4h6M1 7.500h14M1 11h14M1 14.400h14" stroke="#506fa8" stroke-width="1.600"/>',
                linespace: '<path d="M3 2v12M1 5l2-3 2 3M1 11l2 3 2-3" fill="none" stroke="#33557d" stroke-width="1.200"/><path d="M7 4.500h8M7 7h8M7 9.500h8M7 12h8" stroke="#506fa8" stroke-width="1.300"/>',
                min: '<path d="M2 8h12" stroke="#333" stroke-width="1.300"/>',
                restore: '<path d="M2 5h9v9H2zM5 5V2h9v9h-3" fill="none" stroke="#333" stroke-width="1.500"/>',
                close: '<path d="M2 2l12 12M14 2L2 14" stroke="#333" stroke-width="1.600"/>',
                chevup: '<path d="M3 11l5-6 5 6" fill="none" stroke="#555" stroke-width="3"/>',
                chevdown: '<path d="M3 5l5 6 5-6" fill="none" stroke="#555" stroke-width="3"/>',
                chevleft: '<path d="M11 3L5 8l6 5" fill="none" stroke="#444" stroke-width="3"/>',
                chevright: '<path d="M5 3l6 5-6 5" fill="none" stroke="#444" stroke-width="3"/>',
                combo: '<path d="M3 5.500l5 5 5-5" fill="none" stroke="#666" stroke-width="2"/>',
                pageup: '<path d="M2 8l6-6 6 6zM2 14l6-6 6 6z" fill="#111"/>',
                pagedown: '<path d="M2 2l6 6 6-6zM2 8l6 6 6-6z" fill="#111"/>',
                dot: '<circle cx="8" cy="8" r="4" fill="#111"/>',
                menu: '<path d="M1 2.500h14M1 6h14M1 9.500h14" stroke="#444" stroke-width="1.200"/><path d="M8 12h6l-3 3.500z" fill="#111"/>',
                ball: '<defs><radialGradient id="b" cx=".35" cy=".3"><stop stop-color="#9cc4ff"/><stop offset=".5" stop-color="#2c5fc4"/><stop offset="1" stop-color="#0b2a78"/></radialGradient></defs><circle cx="8" cy="8" r="7" fill="url(#b)"/>',
                arrow: '<path d="M0 6.500h8V3l8 5.500L8 14v-3.500H0z" fill="#2f62c8"/><path d="M1 7h8" stroke="#88b0f0"/>',
                cubes: '<path d="M3 3.500L7 2l3 1.500V8L7 9 3 8z" fill="#2aa7e8"/><path d="M8 2.500L12 1l3 2v4l-3 2-4-1z" fill="#5bcb3a"/><path d="M1 7.500l4-1L8 8v6l-3 1-4-2z" fill="#62d73c"/><path d="M8 8l4-1.500L15 8v5l-3 2-4-1z" fill="#35b2ee"/><path d="M5 9v6M1 7.500L5 9l3-1M12 9.500V15M8 8l4 1.500L15 8M3 3.500L7 5l3-1.500M7 5v2" stroke="#e9fbe4" stroke-width=".7" fill="none"/>',
                people: '<ellipse cx="8" cy="14" rx="7" ry="1.500" fill="#ccc"/><path d="M4 13c0-6 2-9 5-9s5 5 4 9z" fill="#2b5b8c"/><path d="M7 6l2-2 2 2 2 7H9z" fill="#1e3350"/><path d="M4 13l3-7 2 7z" fill="#58a84a"/><circle cx="3" cy="4" r="1.800" fill="#f0862c"/><circle cx="7.500" cy="1.800" r="1.800" fill="#e84a3a"/><circle cx="12.500" cy="3" r="1.800" fill="#b64bd4"/><circle cx="2" cy="9" r="1.800" fill="#e8417a"/><circle cx="14.500" cy="7.500" r="1.500" fill="#d94fc6"/>',
                photos: '<path d="M1 4l11-3 2 9-11 3z" fill="#fff" stroke="#b9c4c9" stroke-width=".7"/><path d="M2 5l9-2.500L12.500 9 4 11.500z" fill="#79c455"/><path d="M4 7l11-2 1 8-11 2z" fill="#fff" stroke="#b9c4c9" stroke-width=".7"/><path d="M5.500 8L14 6.500l.5 5.500-8.500 1.500z" fill="#4fa3d8"/><path d="M6 13l3-3 2 2 2-1.500 1.500 1z" fill="#4d9a41"/>',
                navring: '<circle cx="8" cy="8" r="6.500" fill="#f7f8fa" stroke="#e39a30" stroke-width="2.200"/><path d="M12 3.500L9.300 9.300 6.700 6.700z" fill="#e0442e"/><path d="M4 12.500l2.700-5.800 2.600 2.600z" fill="#3b72b8"/>',
                page1: '<path d="M3 1.500h6.500l3.500 4v9H3z" fill="#fff" stroke="#8a8f98" stroke-width="1.300"/><path d="M9 2v4h4" fill="none" stroke="#8a8f98"/>',
                page2: '<path d="M.7 3h4.500l2 2.500V13H.7zM8.800 3h4.500l2 2.500V13H8.800z" fill="#b9d0f4" stroke="#4a6ea8"/><path d="M5 3v3h2M13 3v3h2" fill="none" stroke="#4a6ea8"/>',
                book: '<path d="M.7 5.500L2.700 3H8v10H.7zM8 3h5.300l2 2.500V13H8z" fill="#fff" stroke="#8a8f98"/>',
                minus: '<circle cx="8" cy="8" r="6.500" fill="#fff" stroke="#7c9ac0" stroke-width="1.300"/><path d="M4.500 8h7" stroke="#3d5f8c" stroke-width="1.600"/>',
                plus: '<circle cx="8" cy="8" r="6.500" fill="#fff" stroke="#7c9ac0" stroke-width="1.300"/><path d="M4.500 8h7M8 4.500v7" stroke="#3d5f8c" stroke-width="1.600"/>',
                windows: '<path d="M0 2.500L7 1.500v6H0zM8 1.300L16 0v7.500H8zM0 8.500h7v6l-7-1zM8 8.500h8V16l-8-1.300z" fill="#0c0c0c"/>',
                lens: '<circle cx="10" cy="6" r="5" fill="none" stroke="#222" stroke-width="1.400"/><path d="M6.500 9.500L1 15" stroke="#222" stroke-width="1.500"/>',
                appmail: '<path d="M0 6l8-5 8 5z" fill="#1d5ba5"/><path d="M2.500 5h11v6h-11z" fill="#fff"/><path d="M0 6l8 5 8-5v9H0z" fill="#2cb0ee"/><path d="M0 15l8-5.500L16 15z" fill="#63cdf7"/>',
                store: '<path d="M5 4V1.500h6V4" fill="none" stroke="#4fb3e8" stroke-width="1.200"/><rect x="0" y="3.500" width="16" height="12.500" rx="2" fill="#164f86"/><path d="M5 7h2.700v2.700H5z" fill="#f25022"/><path d="M8.300 7H11v2.700H8.300z" fill="#7fba00"/><path d="M5 10.300h2.700V13H5z" fill="#23a9f2"/><path d="M8.300 10.300H11V13H8.300z" fill="#ffb900"/>',
                skype: '<circle cx="5.500" cy="5.500" r="4.800" fill="#18a9ee"/><circle cx="10.500" cy="10.500" r="4.800" fill="#0f83d6"/><circle cx="8" cy="8" r="6.800" fill="#1a9ee8"/><path d="M10.700 5.700C9.500 4 5.500 4.200 5.700 6.200 6 8.300 10.600 7.500 10.600 9.800c0 2.200-4.200 2.200-5.200.3" fill="none" stroke="#fff" stroke-width="1.700"/>',
                wechat: '<rect width="16" height="16" fill="#12c41d"/><ellipse cx="6.300" cy="6.600" rx="4.600" ry="3.800" fill="#fff"/><path d="M3 9l0 2.500 2-1.500z" fill="#fff"/><ellipse cx="10.500" cy="10" rx="3.900" ry="3.200" fill="#fff" stroke="#12c41d" stroke-width=".6"/><path d="M13 12l.5 2-2-1z" fill="#fff"/><circle cx="4.700" cy="5.800" r=".7" fill="#12c41d"/><circle cx="7.800" cy="5.800" r=".7" fill="#12c41d"/><circle cx="9.300" cy="9.300" r=".6" fill="#12c41d"/><circle cx="11.800" cy="9.300" r=".6" fill="#12c41d"/>',
                firefox: '<defs><linearGradient id="f" x1="1" x2="0" y2="1"><stop stop-color="#ffd83a"/><stop offset=".5" stop-color="#ff8a1e"/><stop offset="1" stop-color="#e8264f"/></linearGradient></defs><path d="M1.500 3.500C2.500 4 3 4 3.500 4 5 2.500 7 2.500 8 3 8 2 9 .8 10 .3 10 2 15.500 4 15.500 9c0 9-15 9-15 0 0-2 .5-4 1-5.500z" fill="url(#f)"/><circle cx="8" cy="9" r="3.700" fill="#7a3ad0"/><path d="M4 7c2-2 5-1 5.500.5-2 0-2 1-1 1.500-1 2-4 1-4.500-2z" fill="#ff9a26"/>',
                acrobat: '<rect x=".5" y=".5" width="15" height="15" rx="2" fill="#ab0b0b"/><path d="M3 12.500C5 11.500 7.500 8 8 3.500 8 7 10 9.500 13 10.200 10 9 5.500 10 3 12.500z" fill="none" stroke="#fff" stroke-width="1.200"/>',
                chrome: '<path d="M8 8L1.500 4.200A7.500 7.500 0 0 1 14.500 4.200z" fill="#e33b2e"/><path d="M8 8l6.500-3.800A7.500 7.500 0 0 1 8 15.500z" fill="#fbc116"/><path d="M8 8v7.500A7.500 7.500 0 0 1 1.500 4.200z" fill="#2ba24c"/><circle cx="8" cy="8" r="3.700" fill="#fff"/><circle cx="8" cy="8" r="2.900" fill="#3d7fe6"/>',
                office: '<circle cx="8" cy="8" r="7.800" fill="#1c86c8"/><path d="M3.500 6.500c2-1.500 3.500-1 4 .2 1.500-1.200 3.500-1.200 6-.7-3 0-5 1-6.200 2.200C6 7 5 6.500 3.500 6.500zM1 10c2-1.200 3.800-.8 4.500.5 2-1.300 4-1.200 6.500-.5-3 0-4.800.8-6.300 2.200C4.500 10.500 3 10 1 10z" fill="#fff"/>',
                edge: '<defs><linearGradient id="e" x2="1" y2=".6"><stop stop-color="#1b8ed2"/><stop offset="1" stop-color="#5ad168"/></linearGradient></defs><path d="M.5 8C1 3 4 .5 8 .5c4.500 0 7.500 3 7.500 6.300 0 3-3 4-5.500 3 1-1.500.5-4-2.500-4.300C4 5.200 1 6.500.5 8z" fill="url(#e)"/><path d="M.5 8C1 6 4 5 6.500 6 4 8 5.500 13.500 10 13.700c2 0 3-.4 4.300-1C11 17.500 0 16.500.5 8z" fill="#146bbd"/>',
                explorer: '<path d="M1 2h5.500L8 4h7v10H1z" fill="#e8ab2e"/><path d="M1 5.500h14V14H1z" fill="#fbd667"/><path d="M3.500 15V9.500h9V15h-2.500v-2.500H6V15z" fill="#3c8ed1"/>',
                ring: '<circle cx="8" cy="8" r="7.700" fill="#2b0d05"/><circle cx="8" cy="8" r="6.300" fill="none" stroke="#9a3a12" stroke-width="1.200"/><path d="M10.500 5C9 2 5 3.500 6.500 6.500L11.500 12M12 8c-.5 5-7.500 5-7.500 1.500C4.500 7.500 7 7 8.500 7" fill="none" stroke="#ffc83a" stroke-width="1.500"/>',
                green: '<rect width="16" height="16" fill="#16300f"/><path d="M0 4l16-2v5L0 9z" fill="#2f6a1c"/><path d="M2 9.500h8M5 12h9" stroke="#7fae3a" stroke-width="1.200"/><path d="M0 14h16v2H0z" fill="#3c7a22"/>',
                camera: '<circle cx="7" cy="8" r="6.800" fill="#f0325f"/><path d="M12 7l4-2.500v7L12 9z" fill="#f0325f"/><circle cx="7" cy="8" r="3.300" fill="none" stroke="#fff" stroke-width="1.200"/><circle cx="7" cy="8" r="1.600" fill="#fff"/>',
                ask: '<circle cx="7" cy="7.500" r="7" fill="#149bd0"/><path d="M4.700 6C4.700 2.700 9.700 3 9.300 6 9 7.500 7 7.500 7 9M7 10.500v1.700" fill="none" stroke="#fff" stroke-width="1.600"/><circle cx="12.500" cy="12" r="3.500" fill="#f4b82e"/><path d="M12.500 10v2.500" stroke="#fff"/>',
                trayup: '<path d="M3 11l5-5 5 5" fill="none" stroke="#222" stroke-width="1.300"/>',
                mic: '<rect x="5" y="1" width="6" height="10" rx="2" fill="#0c0c0c"/><path d="M3 8.500c0 6 10 6 10 0M8 13v2.500M5.500 15.300h5" fill="none" stroke="#222"/>',
                monitor: '<path d="M5 3.500h10v8H4v-4M9 11.500V14M6 14h6" fill="none" stroke="#222" stroke-width="1.100"/><path d="M1 2.500h4v4H1zM3 6.500V11" fill="none" stroke="#222" stroke-width="1.100"/>',
                volume: '<path d="M1 6.500h2.500L7 3v10L3.500 9.500H1zM9 6q1.500 2 0 4M11 4.500q2.500 3.500 0 7" fill="none" stroke="#222" stroke-width="1.100"/><path d="M13.500 3.500q3 4.500 0 9" fill="none" stroke="#999" stroke-width=".9"/>',
                note: '<path d="M0 1h13v9.500H5L2.500 13v-2.500H0z" fill="#0c0c0c"/><path d="M2 4h9M2 6.500h9" stroke="#7a8088" stroke-width=".8"/><circle cx="12" cy="11.500" r="4.200" fill="#d6dbe2" stroke="#555" stroke-width=".7"/><path d="M10.700 9.700h2.200l-1.200 1.500c2 0 1.500 2.300-1 1.900" fill="none" stroke="#222" stroke-width=".9"/>'
            }

            class FromTemplate extends HTMLElement {
                constructor() {
                    super()
                    const content = document.getElementById(this.localName).content
                    this.attachShadow({ mode: 'open' }).appendChild(content.cloneNode(true))
                }
            }

            // small parts build their shadow root from their attributes
            class Part extends HTMLElement {
                connectedCallback() {
                    if (this.shadowRoot) return
                    this.attachShadow({ mode: 'open' }).innerHTML = this.render()
                }
            }

            customElements.define(
                'oo-icon',
                class extends Part {
                    render() {
                        return `<style>
                            :host { display: inline-block; flex: none; vertical-align: middle; line-height: 0; }
                            svg { display: block; width: var(--size, 16px); height: var(--size, 16px); }
                        </style><svg viewBox="0 0 16 16" aria-hidden="true">${icons[this.getAttribute('name')]}</svg>`
                    }
                }
            )

            customElements.define(
                'tool-button',
                class extends Part {
                    render() {
                        const label = this.getAttribute('label')
                        const drop = this.hasAttribute('drop')
                            ? `<button class="drop" aria-label="${label} options"><svg width="7" height="4"><path d="M1 0h6L4 3.500z"/></svg></button>`
                            : ''
                        return `<style>
                            :host { display: flex; flex: none; height: 22px; }
                            button { display: grid; place-items: center; width: 21px; padding: 0; border: 0; background: none; --size: 14px; }
                            :host(.tight) button { width: 14px; }
                            :host([active]) button { background: #cde5f7; box-shadow: inset 0 0 0 1px #b4d6ee; }
                            :host .drop { width: 9px; fill: #222; }
                            :host(.tight) .drop { width: 15px; }
                            :host([dim]) .drop { fill: #bbb; }
                        </style><button aria-label="${label}"><oo-icon name="${this.getAttribute('icon')}"></oo-icon></button>${drop}`
                    }
                }
            )

            customElements.define(
                'tool-grip',
                class extends Part {
                    render() {
                        return `<style>
                            :host { display: block; flex: none; width: 10px; height: 17px; box-sizing: border-box; padding-left: 3px; }
                            div { height: 100%; width: 2px; background: repeating-linear-gradient(#aaa 0 1px, transparent 1px 3px); }
                        </style><div></div>`
                    }
                }
            )

            customElements.define(
                'tool-sep',
                class extends Part {
                    render() {
                        return `<style>
                            :host { display: block; flex: none; width: 1px; height: 14px; margin: 0 2px 0 3px; background: #ccc; }
                        </style>`
                    }
                }
            )

            customElements.define(
                'tool-more',
                class extends Part {
                    render() {
                        return `<style>
                            :host { display: block; flex: none; height: 25px; border-right: 1px solid #ddd; }
                            button { width: 9px; height: 25px; padding: 15px 0 0; border: 0; display: grid; place-items: center;
                                background: linear-gradient(#f0f0f0, #a8a8a8); }
                        </style><button aria-label="More controls"><svg width="7" height="4"><path d="M1 0h6L4 3.500z"/></svg></button>`
                    }
                }
            )

            customElements.define(
                'tool-group',
                class extends Part {
                    render() {
                        return `<style>
                            :host { display: flex; justify-self: start; box-sizing: border-box; border: 1px solid #d4d4d6; height: 25px; align-items: center; }
                        </style><slot></slot>`
                    }
                }
            )

            customElements.define(
                'combo-box',
                class extends Part {
                    render() {
                        const text = this.getAttribute('text')
                        const label = this.getAttribute('label')
                        const field = this.hasAttribute('editable')
                            ? `<input type="text" aria-label="${label}" value="${text}" />`
                            : `<select aria-label="${label}"><option>${text}</option></select>`
                        return `<style>
                            :host { display: flex; position: relative; flex: none; height: 18px; box-sizing: border-box; border: 1px solid #b4b4b4; background: #fff; }
                            select, input { appearance: none; flex: 1; min-width: 0; border: 0; padding: 0 15px 0 2px; background: none; font: inherit; color: inherit; outline: 0; }
                            /* arrow lies over the right end of the field */
                            span { position: absolute; right: 0; top: 0; bottom: 0; width: 14px; display: grid; place-items: center;
                                border-left: 1px solid #c0c0c0; background: #e6e6e6; --size: 9px; pointer-events: none; }
                        </style>${field}<span><oo-icon name="combo"></oo-icon></span>`
                    }
                }
            )

            customElements.define(
                'spin-field',
                class extends Part {
                    render() {
                        return `<style>
                            :host { display: flex; align-items: center; gap: 5px; height: 20px; --size: 13px; }
                            div { flex: 1; min-width: 0; display: flex; height: 18px; border: 1px solid #b8b8b8; background: #fff; }
                            input { flex: 1; min-width: 0; border: 0; padding: 0 0 0 2px; font: inherit; color: inherit; outline: 0; background: none; }
                            span { width: 13px; display: grid; background: #f0f0f0; border-left: 1px solid #ccc; }
                            button { padding: 0; border: 0; background: none; display: grid; place-items: center; }
                            button + button { border-top: 1px solid #ccc; }
                        </style>
                        <oo-icon name="${this.getAttribute('icon')}"></oo-icon>
                        <div>
                            <input type="text" aria-label="${this.getAttribute('label')}" value='0.00 "' />
                            <span>
                                <button aria-label="Increase"><svg width="6" height="4"><path d="M1 4h4L3 1z"/></svg></button>
                                <button aria-label="Decrease"><svg width="6" height="4"><path d="M1 0h4L3 3z"/></svg></button>
                            </span>
                        </div>`
                    }
                }
            )

            customElements.define(
                'panel-head',
                class extends Part {
                    render() {
                        const plus = this.hasAttribute('open') ? '' : 'M5 2.500v4'
                        return `<style>
                            :host { display: flex; align-items: center; height: 22px; padding: 0 4px 0 4px; box-sizing: border-box; }
                            :host(:not(:first-of-type)) { border-top: 1px solid #b4b4b4; }
                            :host([last]) { border-bottom: 1px solid #b4b4b4; height: 23px; }
                            h3 { flex: 1; margin: 0 0 0 3px; font: 600 10px/14px 'Open Sans', sans-serif; }
                            button { padding: 0; border: 0; background: none; display: flex; }
                        </style>
                        <button aria-label="Toggle"><svg width="9" height="9" fill="none" stroke="#666"><path d="M1.500.5h7v8h-7zM3 4.500h4${plus}"/></svg></button>
                        <h3><slot></slot></h3>
                        <button aria-label="More options"><svg width="10" height="3"><path d="M1 0h2v2H1zM4 0h2v2H4zM7 0h2v2H7z" fill="#333"/></svg></button>`
                    }
                }
            )

            customElements.define(
                'h-ruler',
                class extends Part {
                    render() {
                        let marks = ''
                        for (let n = -7; n <= 76; n++) {
                            const x = 64 + n * 8
                            if (n === 0) continue
                            if (n % 10 === 0) {
                                marks += `<text x="${x}" y="15">${n / 10}</text>`
                            } else if (n % 5 === 0) {
                                marks += `<path d="M${x} 9v4" stroke="#777"/>`
                            } else {
                                marks += `<path d="M${x} 11h1" stroke="#999"/>`
                            }
                        }
                        for (let x = 103; x < 615; x += 39) {
                            marks += `<path d="M${x - 2} 17.500h5M${x + 0.500} 15v3" stroke="#444"/>`
                        }
                        return `<style>
                            :host { display: flex; height: 21px; background: #f0f0f1; }
                            .corner { width: 13px; height: 13px; margin: 3px 6px 0 3px; border: 1px solid #b4b4b4; box-sizing: border-box; background: #fafafa; flex: none; }
                            .scale { flex: 1; display: flex; justify-content: center; overflow: hidden; }
                            svg { display: block; flex: none; }
                            text { font: 11px 'Open Sans', sans-serif; fill: #333; text-anchor: middle; }
                        </style>
                        <div class="corner"><svg width="11" height="11"><path d="M3.500 3v5H8" fill="none" stroke="#111" stroke-width="2"/></svg></div>
                        <div class="scale"><svg width="680" height="21">
                            <path d="M64 2h554v16H64z" fill="#fdfdfd"/>
                            <path d="M.5 3.500h63v14H.5zM618.500 3.500h61v14h-61z" fill="#ebebec" stroke="#b0b0b0"/>
                            ${marks}
                            <path d="M59.500 3.500h9v3l-3.500 4 3.500 4v3h-9v-3l3.500-4-3.500-4z" fill="#f4f4f4" stroke="#777"/>
                            <path d="M618.500 2v9l-5 4.500v2h9v-2l-4-4" fill="#f4f4f4" stroke="#888"/>
                        </svg></div>`
                    }
                }
            )

            customElements.define(
                'v-ruler',
                class extends Part {
                    render() {
                        let marks = ''
                        for (let n = -1; n < 64; n++) {
                            const y = 10 + n * 8
                            if (n % 10 === 0) {
                                marks += `<text transform="translate(16 ${y}) rotate(-90)">${n / 10 + 2}</text>`
                            } else if (n % 5 === 0) {
                                marks += `<path d="M9 ${y}h3" stroke="#777"/>`
                            } else {
                                marks += `<path d="M10 ${y}h1" stroke="#999"/>`
                            }
                        }
                        return `<style>
                            :host { display: block; width: 21px; flex: none; overflow: hidden; background: #f0f0f1; }
                            svg { display: block; }
                            text { font: 11px 'Open Sans', sans-serif; fill: #333; text-anchor: middle; }
                        </style><svg width="21" height="540"><path d="M3 0h15v522H3z" fill="#fdfdfd"/>${marks}</svg>`
                    }
                }
            )

            for (const name of ['title-bar', 'menu-bar', 'standard-bar', 'format-bar', 'doc-page', 'v-scroll', 'h-scroll', 'side-bar', 'status-bar', 'task-bar', 'rec-mark', 'writer-app']) {
                customElements.define(name, class extends FromTemplate {})
            }
        </script>
    </body>
</html>
